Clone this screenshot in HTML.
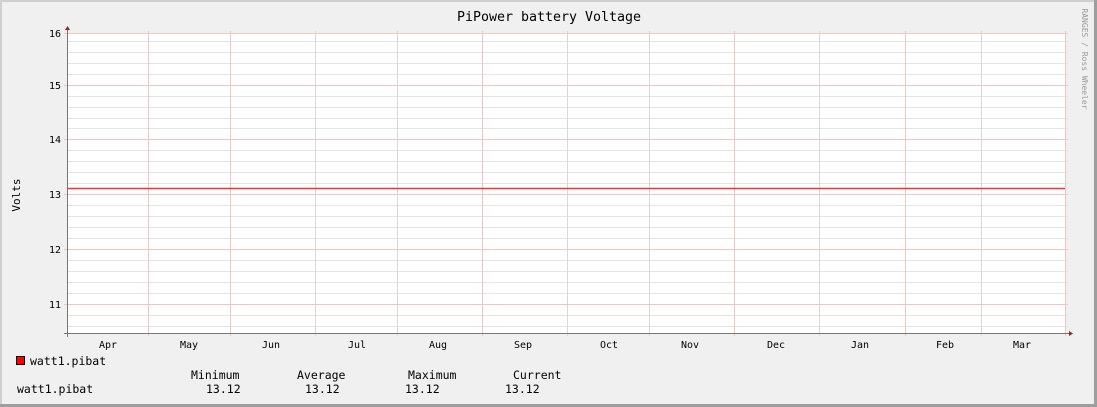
<!DOCTYPE html>
<html><head><style>
html,body{margin:0;padding:0;background:#f0f0f0;}
svg{display:block;}
text{font-family:"DejaVu Sans Mono","Liberation Mono",monospace;font-size:10px;fill:#000;}
.lg{font-size:11.5px;}
</style></head><body>
<svg width="1097" height="407" xmlns="http://www.w3.org/2000/svg">
<rect x="0" y="0" width="1097" height="407" fill="#f0f0f0"/>
<rect x="0" y="0" width="1097" height="2" fill="#cfcfcf"/>
<rect x="0" y="0" width="2" height="407" fill="#cfcfcf"/>
<rect x="0" y="404" width="1097" height="3" fill="#9e9e9e"/>
<rect x="1094" y="0" width="3" height="407" fill="#9e9e9e"/>
<rect x="67" y="33" width="998" height="300" fill="#fff"/>
<g stroke="#e4e4e4" stroke-width="1">
<line x1="67" x2="1068" y1="41.5" y2="41.5"/><line x1="67" x2="1068" y1="52.5" y2="52.5"/><line x1="67" x2="1068" y1="63.5" y2="63.5"/><line x1="67" x2="1068" y1="74.5" y2="74.5"/>
<line x1="67" x2="1068" y1="96.5" y2="96.5"/><line x1="67" x2="1068" y1="107.5" y2="107.5"/><line x1="67" x2="1068" y1="118.5" y2="118.5"/><line x1="67" x2="1068" y1="128.5" y2="128.5"/>
<line x1="67" x2="1068" y1="150.5" y2="150.5"/><line x1="67" x2="1068" y1="161.5" y2="161.5"/><line x1="67" x2="1068" y1="172.5" y2="172.5"/><line x1="67" x2="1068" y1="183.5" y2="183.5"/>
<line x1="67" x2="1068" y1="205.5" y2="205.5"/><line x1="67" x2="1068" y1="216.5" y2="216.5"/><line x1="67" x2="1068" y1="227.5" y2="227.5"/><line x1="67" x2="1068" y1="238.5" y2="238.5"/>
<line x1="67" x2="1068" y1="260.5" y2="260.5"/><line x1="67" x2="1068" y1="271.5" y2="271.5"/><line x1="67" x2="1068" y1="282.5" y2="282.5"/><line x1="67" x2="1068" y1="293.5" y2="293.5"/>
<line x1="67" x2="1068" y1="315.5" y2="315.5"/><line x1="67" x2="1068" y1="326.5" y2="326.5"/>
</g>
<g stroke="#d8d8d8">
<line x1="315.5" x2="315.5" y1="31" y2="336"/><line x1="397.5" x2="397.5" y1="31" y2="336"/><line x1="567.5" x2="567.5" y1="31" y2="336"/><line x1="649.5" x2="649.5" y1="31" y2="336"/><line x1="819.5" x2="819.5" y1="31" y2="336"/><line x1="981.5" x2="981.5" y1="31" y2="336"/>
</g>
<g stroke="#f2c4c4">
<line x1="148.5" x2="148.5" y1="31" y2="336"/><line x1="230.5" x2="230.5" y1="31" y2="336"/><line x1="482.5" x2="482.5" y1="31" y2="336"/><line x1="734.5" x2="734.5" y1="31" y2="336"/><line x1="905.5" x2="905.5" y1="31" y2="336"/><line x1="1065.5" x2="1065.5" y1="31" y2="336"/>
<line x1="64" x2="1068" y1="33.5" y2="33.5"/><line x1="64" x2="1068" y1="85.5" y2="85.5"/><line x1="64" x2="1068" y1="139.5" y2="139.5"/><line x1="64" x2="1068" y1="194.5" y2="194.5"/><line x1="64" x2="1068" y1="249.5" y2="249.5"/><line x1="64" x2="1068" y1="304.5" y2="304.5"/>
</g>
<line x1="67" x2="1065" y1="188.5" y2="188.5" stroke="#ff3030" stroke-width="1.5"/>
<line x1="67.5" x2="67.5" y1="29" y2="337" stroke="#777"/>
<line x1="64" x2="1070" y1="333.5" y2="333.5" stroke="#777"/>
<polygon points="65,30 70,30 67.5,26" fill="#a02020"/>
<polygon points="1069,331 1069,336 1073,333.5" fill="#a02020"/>
<text x="549" y="21" text-anchor="middle" style="font-size:13.3px">PiPower battery Voltage</text>
<g text-anchor="end" style="font-size:11px">
<text x="61" y="37">16</text><text x="61" y="89">15</text><text x="61" y="143">14</text><text x="61" y="198">13</text><text x="61" y="253">12</text><text x="61" y="308">11</text>
</g>
<text transform="translate(20,195) rotate(-90)" text-anchor="middle" style="font-size:11px">Volts</text>
<text transform="translate(1082,59) rotate(90)" text-anchor="middle" style="font-size:8px;fill:#999">RANGES / Ross Wheeler</text>
<g text-anchor="middle">
<text x="108" y="348">Apr</text><text x="189" y="348">May</text><text x="271" y="348">Jun</text><text x="357" y="348">Jul</text><text x="438" y="348">Aug</text><text x="523" y="348">Sep</text><text x="609" y="348">Oct</text><text x="690" y="348">Nov</text><text x="776" y="348">Dec</text><text x="860" y="348">Jan</text><text x="945" y="348">Feb</text><text x="1022" y="348">Mar</text>
</g>
<rect x="16.5" y="356.5" width="8" height="8" fill="#ff0000" stroke="#000"/>
<text class="lg" x="30" y="365">watt1.pibat</text>
<text class="lg" x="191" y="379">Minimum</text><text class="lg" x="297" y="379">Average</text><text class="lg" x="408" y="379">Maximum</text><text class="lg" x="513" y="379">Current</text>
<text class="lg" x="17" y="393">watt1.pibat</text>
<text class="lg" x="206" y="393">13.12</text><text class="lg" x="305" y="393">13.12</text><text class="lg" x="405" y="393">13.12</text><text class="lg" x="505" y="393">13.12</text>
</svg>
</body></html>
